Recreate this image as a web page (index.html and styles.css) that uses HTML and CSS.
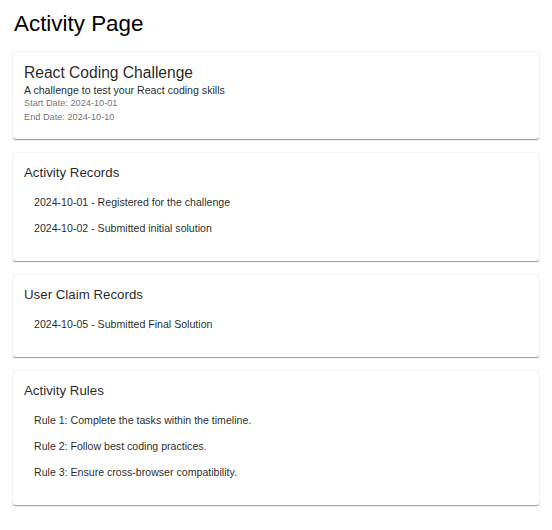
FILE: index.html
```html
<!DOCTYPE html>
<html lang="en">
<head>
<meta charset="utf-8">
<title>Activity Page</title>
<link rel="stylesheet" href="styles.css">
</head>
<body>
<div class="page">
  <h1 class="page-title">Activity Page</h1>
  <section class="card">
    <h2 class="card-title">React Coding Challenge</h2>
    <p class="desc">A challenge to test your React coding skills</p>
    <p class="meta">Start Date: 2024-10-01</p>
    <p class="meta">End Date: 2024-10-10</p>
  </section>
  <section class="card">
    <h3 class="section-title">Activity Records</h3>
    <ul class="list">
      <li class="item">2024-10-01 - Registered for the challenge</li>
      <li class="item">2024-10-02 - Submitted initial solution</li>
    </ul>
  </section>
  <section class="card">
    <h3 class="section-title">User Claim Records</h3>
    <ul class="list">
      <li class="item">2024-10-05 - Submitted Final Solution</li>
    </ul>
  </section>
  <section class="card">
    <h3 class="section-title">Activity Rules</h3>
    <ul class="list">
      <li class="item">Rule 1: Complete the tasks within the timeline.</li>
      <li class="item">Rule 2: Follow best coding practices.</li>
      <li class="item">Rule 3: Ensure cross-browser compatibility.</li>
    </ul>
  </section>
</div>
</body>
</html>
```
FILE: styles.css
```css
html, body {
  margin: 0;
  padding: 0;
  background: #fff;
}
body {
  font-family: "Liberation Sans", Arial, sans-serif;
  color: rgba(0, 0, 0, 0.87);
}
.page {
  padding: 9px 13px;
  display: flex;
  flex-direction: column;
  gap: 14px;
}
.page-title {
  margin: 0 0 -1px 1px;
  font-size: 22.4px;
  font-weight: 400;
  line-height: 30px;
  color: #000;
}
.card {
  background: #fff;
  border-radius: 3px;
  box-shadow: 0 1.4px 0.7px -0.7px rgba(0,0,0,0.2), 0 0.7px 0.7px 0 rgba(0,0,0,0.14), 0 0.7px 2.1px 0 rgba(0,0,0,0.12);
  padding: 10px 11px 15px;
}
.card-title {
  margin: 0;
  font-size: 15.6px;
  font-weight: 400;
  line-height: 21px;
}
.desc {
  margin: 0;
  font-size: 10.6px;
  line-height: 14px;
}
.meta {
  margin: 0;
  font-size: 9.2px;
  line-height: 13.5px;
  color: rgba(0, 0, 0, 0.6);
}
.section-title {
  margin: 0;
  font-size: 13.3px;
  font-weight: 400;
  line-height: 20px;
}
.list {
  list-style: none;
  margin: 0;
  padding: 6px 0 5px;
}
.item {
  font-size: 10.6px;
  line-height: 26px;
  padding-left: 10px;
}
```
